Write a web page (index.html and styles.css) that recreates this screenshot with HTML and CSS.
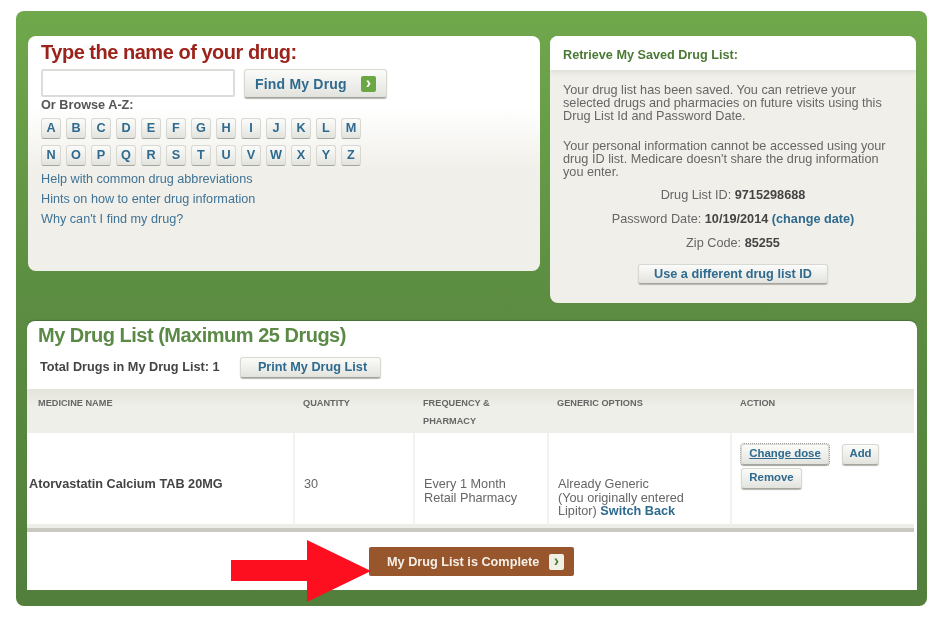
FILE: index.html
```html
<!DOCTYPE html>
<html lang="en">
  <head>
    <meta charset="UTF-8" />
    <title>My Drug List</title>
    <link rel="stylesheet" href="styles.css">
  </head>
  <body>
    <div class="frame">
      <div class="top-row">
        <div class="search-panel">
          <h1>Type the name of your drug:</h1>
          <div class="search-row">
            <input type="text" class="search-input" />
            <button class="btn find-btn">Find My Drug <span class="go-icon">&#8250;</span></button>
          </div>
          <p class="browse-label">Or Browse A-Z:</p>
          <div class="letters">
            <a>A</a><a>B</a><a>C</a><a>D</a><a>E</a><a>F</a><a>G</a><a>H</a><a>I</a><a>J</a><a>K</a><a>L</a><a>M</a>
            <a>N</a><a>O</a><a>P</a><a>Q</a><a>R</a><a>S</a><a>T</a><a>U</a><a>V</a><a>W</a><a>X</a><a>Y</a><a>Z</a>
          </div>
          <ul class="help-links">
            <li>Help with common drug abbreviations</li>
            <li>Hints on how to enter drug information</li>
            <li>Why can't I find my drug?</li>
          </ul>
        </div>
        <div class="saved-panel">
          <div class="saved-header">Retrieve My Saved Drug List:</div>
          <div class="saved-body">
            <p>Your drug list has been saved. You can retrieve your<br />selected drugs and pharmacies on future visits using this<br />Drug List Id and Password Date.</p>
            <p>Your personal information cannot be accessed using your<br />drug ID list. Medicare doesn't share the drug information<br />you enter.</p>
            <div class="saved-info">Drug List ID: <b>9715298688</b></div>
            <div class="saved-info">Password Date: <b>10/19/2014</b> <b class="link">(change date)</b></div>
            <div class="saved-info">Zip Code: <b>85255</b></div>
            <button class="btn other-btn">Use a different drug list ID</button>
          </div>
        </div>
      </div>
      <div class="list-panel">
        <h2>My Drug List (Maximum 25 Drugs)</h2>
        <div class="total-row">
          <span class="total">Total Drugs in My Drug List: 1</span>
          <button class="btn print-btn">Print My Drug List</button>
        </div>
        <table class="drug-table">
          <colgroup>
            <col class="col-name" /><col class="col-qty" /><col class="col-freq" /><col class="col-gen" /><col />
          </colgroup>
          <thead>
            <tr>
              <th>Medicine Name</th>
              <th>Quantity</th>
              <th>Frequency &amp;<br />Pharmacy</th>
              <th>Generic Options</th>
              <th>Action</th>
            </tr>
          </thead>
          <tbody>
            <tr>
              <td class="drug-name">Atorvastatin Calcium TAB 20MG</td>
              <td>30</td>
              <td>Every 1 Month<br />Retail Pharmacy</td>
              <td>Already Generic<br />(You originally entered<br />Lipitor) <b class="link">Switch Back</b></td>
              <td class="actions">
                <div class="action-btns">
                  <button class="btn small-btn change-btn"><u>Change dose</u></button>
                  <button class="btn small-btn add-btn">Add</button>
                  <button class="btn small-btn remove-btn">Remove</button>
                </div>
              </td>
            </tr>
          </tbody>
        </table>
        <div class="complete-row">
          <button class="complete-btn">My Drug List is Complete <span class="go-icon light">&#8250;</span></button>
        </div>
      </div>
      <svg class="arrow" width="140" height="62" viewBox="0 0 140 62"><path d="M0 20H76V0L140 31L76 62V41H0Z" fill="#fd0f20" /></svg>
    </div>
  </body>
</html>
```

FILE: styles.css
```css
* {
  margin: 0;
  padding: 0;
  box-sizing: border-box;
}
body {
  font-family: "Liberation Sans", Arial, sans-serif;
  background-color: #fff;
  padding: 11px 21px 0 16px;
}
.frame {
  position: relative;
  height: 595px;
  padding: 25px 10px 0 12px;
  border-radius: 8px;
  background: linear-gradient(#70a84c, #5b8c41 50%, #527f3c);
  filter: blur(0.5px);
}
.top-row {
  display: flex;
  align-items: flex-start;
  gap: 10px;
}
.search-panel {
  width: 512px;
  height: 235px;
  padding: 4px 13px;
  border-radius: 8px;
  background: linear-gradient(#fff, #fff 30%, #f0efe9 58%);
}
.search-panel h1 {
  font-size: 20px;
  line-height: 24px;
  letter-spacing: -0.48px;
  color: #9c231b;
}
.search-row {
  display: flex;
  gap: 9px;
  margin-top: 5px;
}
.search-input {
  width: 194px;
  height: 28px;
  border: 2px solid #dcdcd8;
  border-radius: 2px;
  background: #fff;
}
.btn {
  font-family: inherit;
  font-weight: bold;
  color: #2f6a8f;
  border: 1px solid #d8d8d2;
  border-bottom-color: #a5a59e;
  border-radius: 3px;
  background: linear-gradient(#fbfbf9, #e3e3de);
  box-shadow: 0 1px 1px #b5b5ae;
}
.find-btn {
  display: flex;
  align-items: center;
  justify-content: space-between;
  width: 143px;
  height: 29px;
  padding: 0 10px;
  font-size: 14px;
  letter-spacing: 0.2px;
}
.go-icon {
  display: block;
  width: 15px;
  height: 16px;
  border-radius: 2px;
  background: #6aa845;
  color: #fff;
  font-size: 16px;
  line-height: 14px;
  text-align: center;
}
.go-icon.light {
  background: #f1f0e6;
  color: #4c7f36;
}
.browse-label {
  font-size: 12.7px;
  line-height: 14px;
  font-weight: bold;
  color: #555;
}
.letters {
  display: grid;
  grid-template-columns: repeat(13, 20px);
  grid-auto-rows: 21px;
  gap: 6px 5px;
  margin-top: 6px;
}
.letters a {
  display: block;
  font-size: 12.7px;
  font-weight: bold;
  line-height: 19px;
  text-align: center;
  color: #2f6a8f;
  border: 1px solid #d8d8d2;
  border-bottom-color: #a5a59e;
  border-radius: 3px;
  background: linear-gradient(#fbfbf9, #e3e3de);
}
.help-links {
  list-style: none;
  margin-top: 3px;
  font-size: 12.65px;
  line-height: 20px;
  color: #3f7396;
}
.saved-panel {
  width: 366px;
  height: 267px;
  border-radius: 8px;
  overflow: hidden;
  background-color: #f0efe9;
}
.saved-header {
  height: 34px;
  padding: 12px 13px 0;
  font-size: 12.65px;
  font-weight: bold;
  color: #4b7a36;
  background-color: #fff;
  box-shadow: 0 2px 5px #dddcd5;
}
.saved-body {
  padding: 14px 13px 0;
  font-size: 12.7px;
  line-height: 13px;
  color: #666;
  text-align: center;
}
.saved-body p {
  margin-bottom: 17px;
  text-align: left;
  white-space: nowrap;
}
.saved-body p + .saved-info {
  margin-top: -8px;
}
.saved-info {
  margin-bottom: 10px;
  line-height: 14px;
}
.saved-body b {
  color: #444;
}
.saved-body b.link,
.link {
  color: #2f6a8f;
}
.other-btn {
  display: block;
  width: 190px;
  height: 20px;
  margin: 14px auto 0;
  font-size: 12.7px;
}
.list-panel {
  position: relative;
  width: 890px;
  height: 269px;
  margin-top: 18px;
  margin-left: -1px;
  border-radius: 8px 8px 0 0;
  background-color: #fff;
  box-shadow: 0 -1px 1px #44703a;
}
.list-panel h2 {
  padding: 1px 11px 0;
  font-size: 20px;
  line-height: 26px;
  letter-spacing: -0.5px;
  color: #5a8a46;
}
.total-row {
  display: flex;
  align-items: center;
  gap: 20px;
  height: 28px;
  margin-top: 5px;
  padding-left: 13px;
}
.total {
  font-size: 12.7px;
  font-weight: bold;
  color: #444;
}
.print-btn {
  width: 141px;
  height: 21px;
  padding-left: 5px;
  font-size: 12.7px;
}
.drug-table {
  width: 887px;
  margin-top: 8px;
  table-layout: fixed;
  border-collapse: separate;
  border-spacing: 0;
  border-bottom: 4px solid #c9c9c1;
}
.col-name {
  width: 266px;
}
.col-qty {
  width: 120px;
}
.col-freq {
  width: 134px;
}
.col-gen {
  width: 183px;
}
.drug-table th {
  height: 44px;
  padding: 5px 10px 0;
  font-size: 9.2px;
  line-height: 18px;
  font-weight: bold;
  text-align: left;
  text-transform: uppercase;
  vertical-align: top;
  color: #666;
  background: linear-gradient(#e4e4dc, #efefe9 40%);
}
.drug-table th:first-child {
  padding-left: 11px;
}
.drug-table td {
  height: 95px;
  padding: 45px 9px 0;
  font-size: 12.7px;
  line-height: 13.5px;
  color: #666;
  border-left: 2px solid #f2f2ee;
  border-bottom: 4px solid #eeeee8;
  vertical-align: top;
}
.drug-table td.drug-name {
  padding-left: 2px;
  padding-right: 0;
  border-left: 0;
  font-weight: bold;
  color: #444;
}
.drug-table td.actions {
  padding: 11px 0 0 9px;
}
.action-btns {
  display: flex;
  flex-wrap: wrap;
  align-items: flex-start;
  gap: 3px 13px;
}
.small-btn {
  height: 21px;
  padding: 0 0 3px;
  font-size: 11.4px;
  white-space: nowrap;
}
.change-btn {
  width: 88px;
  outline: 1px dotted #999;
}
.add-btn {
  width: 37px;
}
.remove-btn {
  width: 61px;
}
.complete-row {
  padding: 15px 0 0 342px;
}
.complete-btn {
  display: flex;
  align-items: center;
  justify-content: space-between;
  width: 205px;
  height: 29px;
  padding: 0 10px 0 18px;
  border: 0;
  border-radius: 2px;
  font-family: inherit;
  font-size: 12.7px;
  font-weight: bold;
  color: #f5efe8;
  background-color: #98562d;
}
.arrow {
  position: absolute;
  left: 215px;
  top: 529px;
}
```
